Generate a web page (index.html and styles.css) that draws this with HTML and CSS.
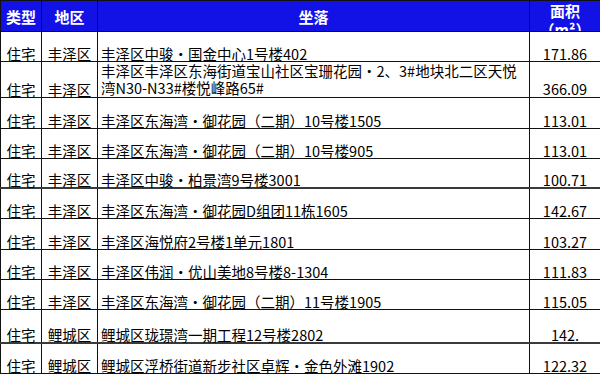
FILE: index.html
```html
<!DOCTYPE html>
<html lang="zh">
<head>
<meta charset="utf-8">
<link rel="stylesheet" href="styles.css">
</head>
<body>
<table class="grid">
  <colgroup>
    <col class="c-type"><col class="c-area"><col class="c-addr"><col class="c-size">
  </colgroup>
  <thead>
    <tr class="head">
      <th>类型</th>
      <th>地区</th>
      <th>坐落</th>
      <th class="size-head"><div class="clip">面积<br>（m²）</div></th>
    </tr>
  </thead>
  <tbody>
    <tr class="h31"><td>住宅</td><td>丰泽区</td><td class="addr">丰泽区中骏·国金中心1号楼402</td><td>171.86</td></tr>
    <tr class="h33 two"><td>住宅</td><td>丰泽区</td><td class="addr">丰泽区丰泽区东海街道宝山社区宝珊花园·2、3#地块北二区天悦<br>湾N30-N33#楼悦峰路65#</td><td class="num2">366.09</td></tr>
    <tr class="h32"><td>住宅</td><td>丰泽区</td><td class="addr">丰泽区东海湾·御花园（二期）10号楼1505</td><td>113.01</td></tr>
    <tr class="h31"><td>住宅</td><td>丰泽区</td><td class="addr">丰泽区东海湾·御花园（二期）10号楼905</td><td>113.01</td></tr>
    <tr class="h30 thick"><td>住宅</td><td>丰泽区</td><td class="addr">丰泽区中骏·柏景湾9号楼3001</td><td>100.71</td></tr>
    <tr class="h31"><td>住宅</td><td>丰泽区</td><td class="addr">丰泽区东海湾·御花园D组团11栋1605</td><td>142.67</td></tr>
    <tr class="h32"><td>住宅</td><td>丰泽区</td><td class="addr">丰泽区海悦府2号楼1单元1801</td><td>103.27</td></tr>
    <tr class="h31"><td>住宅</td><td>丰泽区</td><td class="addr">丰泽区伟润·优山美地8号楼8-1304</td><td>111.83</td></tr>
    <tr class="h31"><td>住宅</td><td>丰泽区</td><td class="addr">丰泽区东海湾·御花园（二期）11号楼1905</td><td>115.05</td></tr>
    <tr class="h34 thick"><td>住宅</td><td>鲤城区</td><td class="addr">鲤城区珑璟湾一期工程12号楼2802</td><td>142.</td></tr>
    <tr class="h31"><td>住宅</td><td>鲤城区</td><td class="addr">鲤城区浮桥街道新步社区卓辉·金色外滩1902</td><td>122.32</td></tr>
  </tbody>
</table>
</body>
</html>
```

FILE: styles.css
```css
html, body {
  margin: 0;
  padding: 0;
  background: #ffffff;
  overflow: hidden;
}

.grid {
  width: 600px;
  table-layout: fixed;
  border-collapse: collapse;
  font-family: "Noto Sans CJK SC", "Liberation Sans", sans-serif;
  color: #000000;
}

.c-type { width: 41px; }
.c-area { width: 56px; }
.c-addr { width: 432px; }
.c-size { width: 71px; }

.grid th,
.grid td {
  border: 1px solid #111111;
  padding: 0 2px;
  white-space: nowrap;
}

.head th {
  background: #1212e6;
  color: #ffffff;
  font-size: 15px;
  font-weight: bold;
  line-height: 16px;
  height: 24px;
  padding-bottom: 6px;
  vertical-align: bottom;
  text-align: center;
}

.head th.size-head {
  vertical-align: top;
  padding: 0 2px;
}

.clip {
  height: 30px;
  overflow: hidden;
  line-height: 19px;
}

.grid td {
  font-size: 14.5px;
  line-height: 14px;
  vertical-align: bottom;
  text-align: center;
}

.grid td.addr {
  text-align: left;
  padding-left: 3px;
}

.two td.addr {
  line-height: 17px;
  padding-bottom: 1px;
}

.two td.num2 {
  padding-bottom: 1px;
}

.h30 td { height: 28px; }
.h31 td { height: 29px; }
.h32 td { height: 30px; }
.h33 td { height: 31px; }
.h34 td { height: 32px; }

.thick td {
  border-bottom: 2px solid #3a3a3a;
}
```
